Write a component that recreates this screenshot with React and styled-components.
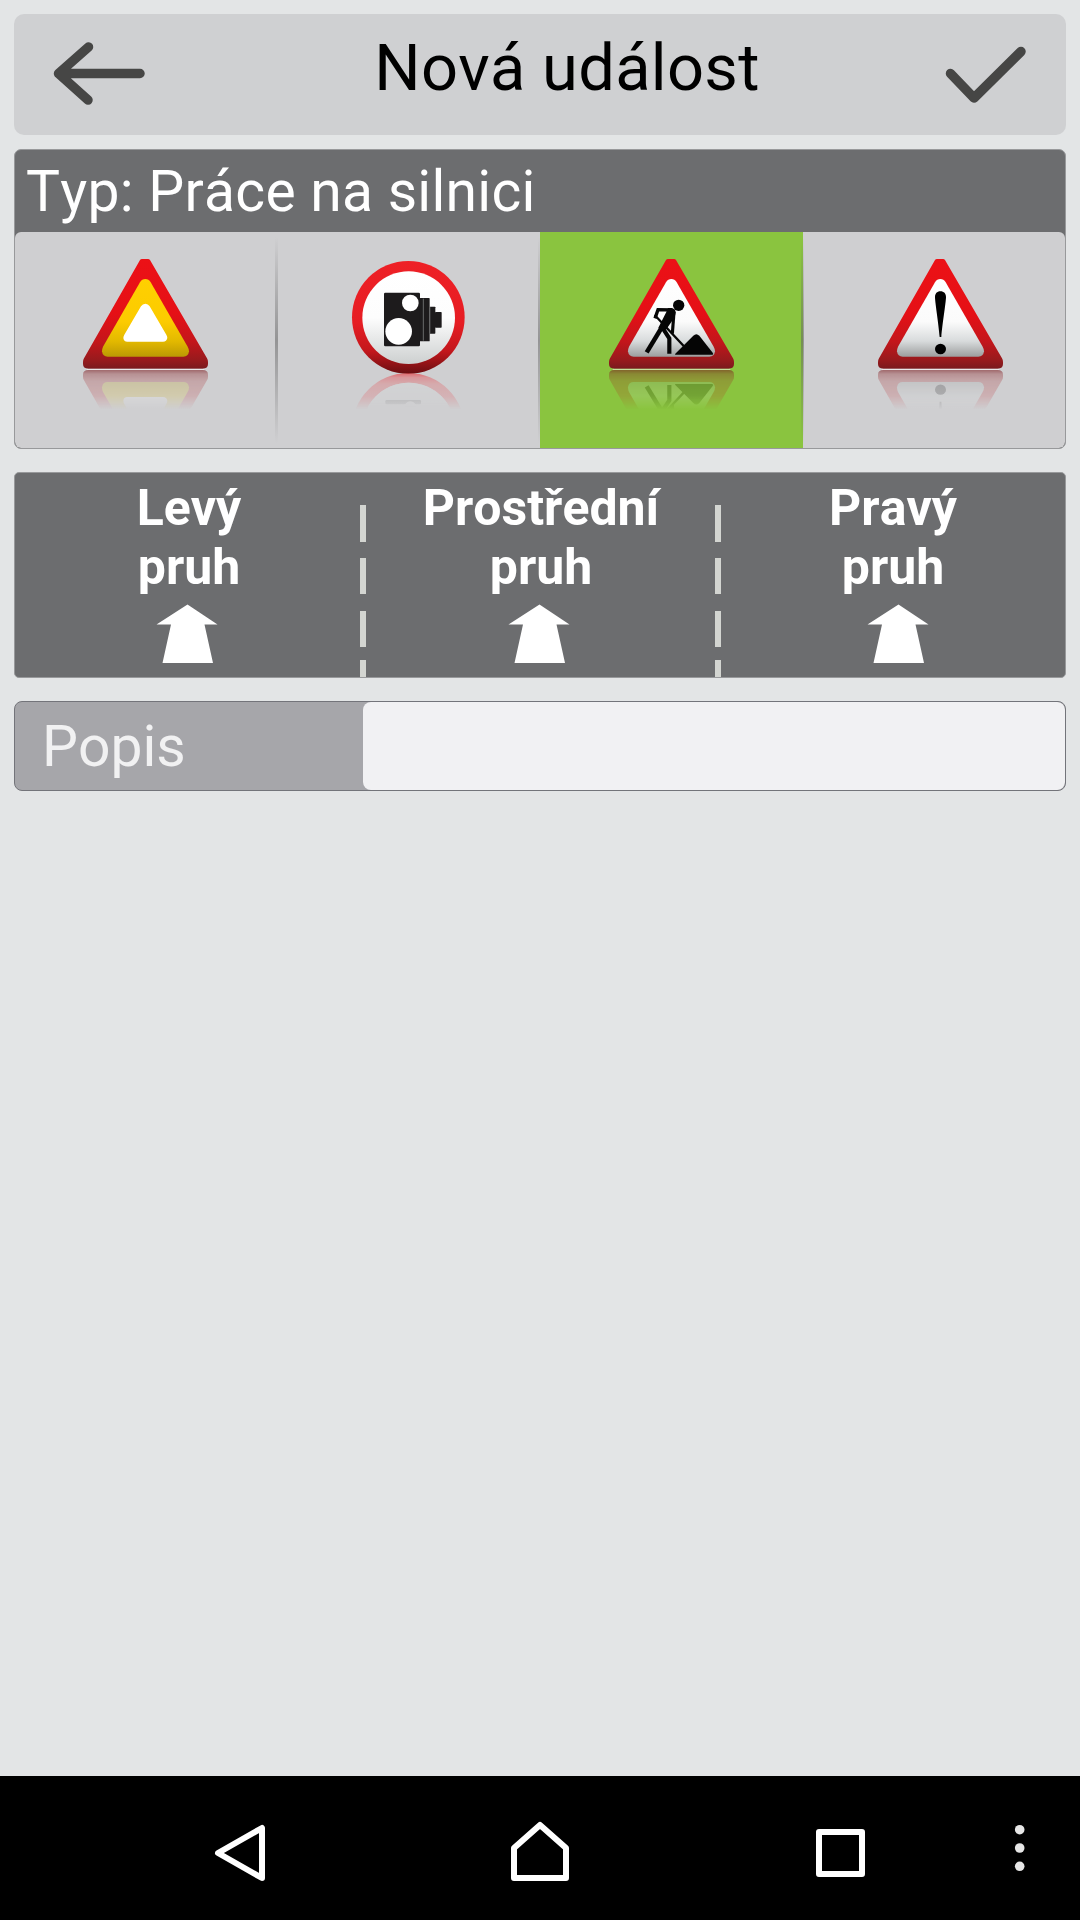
import React from 'react';
import styled, { createGlobalStyle } from 'styled-components';

const GlobalStyle = createGlobalStyle`
  * { box-sizing: border-box; }
  body { margin: 0; background: #e3e5e6; }
  button { border: 0; padding: 0; margin: 0; background: none; font: inherit; color: inherit; }
  svg { display: block; }
`;

const Screen = styled.div`
  display: flex;
  flex-direction: column;
  width: 1080px;
  height: 1920px;
  background: #e3e5e6;
  font-family: Roboto, 'Noto Sans', sans-serif;
  font-kerning: none;
`;

const Content = styled.main`
  flex: 1;
  display: flex;
  flex-direction: column;
  padding: 14px 14px 0;
`;

const Header = styled.header`
  display: grid;
  grid-template-columns: 185px 1fr 131px;
  height: 121px;
  border-radius: 10px;
  background: #cfd0d2;
`;

const HeaderButton = styled.button`
  display: flex;
  align-items: flex-start;
  padding: ${(p) => p.$pad};
`;

const Title = styled.h1`
  margin: 0;
  padding-top: 16px;
  text-align: center;
  font-size: 65px;
  font-weight: 400;
  line-height: 76px;
  letter-spacing: 0.3px;
  color: #000;
  white-space: nowrap;
`;

const TypePanel = styled.section`
  margin-top: 14px;
  height: 300px;
  border: 1px solid #98999b;
  border-radius: 7px;
  background: #6c6d6f;
  overflow: hidden;
`;

const TypeTitle = styled.h2`
  margin: 0;
  height: 82px;
  padding: 8px 0 0 11px;
  font-size: 57px;
  font-weight: 400;
  line-height: 67px;
  letter-spacing: 0.26px;
  color: #fff;
  white-space: nowrap;
`;

const TypeRow = styled.div`
  display: grid;
  grid-template-columns: 262px 263px 263px 1fr;
  height: 216px;
  border-radius: 6px;
  background: #cfcfd1;
  overflow: hidden;
`;

const TypeCell = styled.button`
  position: relative;
  display: flex;
  justify-content: center;
  align-items: flex-start;
  padding: 25px ${(p) => p.$right || 0}px 0 ${(p) => p.$left || 0}px;
  background: ${(p) => (p.$selected ? '#8ac43f' : 'transparent')};

  &:not(:last-child)::after {
    content: '';
    position: absolute;
    top: 5px;
    bottom: 5px;
    right: -1px;
    width: 3px;
    background: linear-gradient(rgba(100, 100, 100, 0), rgba(100, 100, 100, 0.55) 50%, rgba(100, 100, 100, 0));
  }
`;

const LanePanel = styled.section`
  display: grid;
  grid-template-columns: 345px 6px 349px 6px 1fr;
  margin-top: 23px;
  height: 206px;
  border: 1px solid #98999b;
  border-radius: 5px;
  background: #6c6d6f;
  overflow: hidden;
`;

const Lane = styled.button`
  display: flex;
  flex-direction: column;
  align-items: center;
  justify-content: flex-start;
  padding: 6px ${(p) => p.$right || 0}px 0 ${(p) => p.$left || 0}px;
  font-weight: 700;
  font-size: 50px;
  line-height: 59px;
  color: #fff;
`;

const LaneArrow = styled.svg`
  margin-top: 7px;
  margin-left: ${(p) => p.$shift || 0}px;
`;

const LaneDivider = styled.div`
  background: linear-gradient(#d3d5d1, #d3d5d1) 0 32px / 6px 37px no-repeat,
    linear-gradient(#d3d5d1, #d3d5d1) 0 85px / 6px 36px no-repeat,
    linear-gradient(#d3d5d1, #d3d5d1) 0 138px / 6px 36px no-repeat,
    linear-gradient(#d3d5d1, #d3d5d1) 0 187px / 6px 17px no-repeat;
`;

const Field = styled.label`
  display: flex;
  margin-top: 23px;
  height: 90px;
  border: 1px solid #73747a;
  border-radius: 8px;
  background: #a6a6aa;
  overflow: hidden;
`;

const FieldLabel = styled.span`
  width: 348px;
  padding: 11px 0 0 27px;
  font-size: 57px;
  line-height: 67px;
  color: #f1f1f2;
`;

const FieldInput = styled.input`
  flex: 1;
  min-width: 0;
  border: 0;
  outline: 0;
  border-radius: 8px;
  background: #f1f1f3;
  font: 400 50px Roboto, sans-serif;
`;

const NavBar = styled.nav`
  display: grid;
  grid-template-columns: 300px 300px 300px 60px;
  height: 144px;
  padding-left: 90px;
  background: #000;
`;

const NavButton = styled.button`
  display: flex;
  justify-content: center;
  align-items: flex-start;
  padding-top: 44px;
`;

const TRIANGLE = 'M240 90 Q242 87 246 87 L264 87 Q268 87 270 90 L441 385 Q444 390 444 396 L444 402 Q444 416 428 416 L85 416 Q69 416 69 402 L69 396 Q69 390 72 385 Z';
const INNER = 'M240 157 Q246 147 256 147 Q266 147 272 157 L383 350 Q387 357 387 364 Q385 380 370 380 L143 380 Q128 380 126 364 Q126 357 129 350 Z';

function SignDefs({ id, mirror, warm }) {
  return (
    <defs>
      <linearGradient id={id + 'red'} x1="0" y1="87" x2="0" y2="416" gradientUnits="userSpaceOnUse">
        <stop offset="0" stopColor="#ec1116" />
        <stop offset="0.5" stopColor="#e51016" />
        <stop offset="0.75" stopColor="#c4161b" />
        <stop offset="0.92" stopColor="#981a1d" />
        <stop offset="1" stopColor="#7a1a1e" />
      </linearGradient>
      <linearGradient id={id + 'in'} x1="0" y1="147" x2="0" y2="380" gradientUnits="userSpaceOnUse">
        <stop offset="0" stopColor={warm ? '#ffd000' : '#ffffff'} />
        <stop offset="0.55" stopColor={warm ? '#fccb00' : '#fbfbfb'} />
        <stop offset="0.8" stopColor={warm ? '#e3b900' : '#d8dbdc'} />
        <stop offset="1" stopColor={warm ? '#bb9904' : '#9c9e9e'} />
      </linearGradient>
      <linearGradient id={id + 'fade'} x1="0" y1={mirror} x2="0" y2="538" gradientUnits="userSpaceOnUse">
        <stop offset="0" stopColor="#fff" stopOpacity="0.6" />
        <stop offset="0.12" stopColor="#fff" stopOpacity="0.34" />
        <stop offset="0.3" stopColor="#fff" stopOpacity="0.22" />
        <stop offset="0.65" stopColor="#fff" stopOpacity="0.17" />
        <stop offset="1" stopColor="#fff" stopOpacity="0" />
      </linearGradient>
      <mask id={id + 'mask'} maskUnits="userSpaceOnUse" x="0" y={mirror} width="600" height="130">
        <rect x="0" y={mirror} width="600" height="130" fill={`url(#${id}fade)`} />
      </mask>
    </defs>
  );
}

function TriangleSign({ id, warm, children }) {
  const art = (
    <>
      <path d={TRIANGLE} fill={`url(#${id}red)`} />
      <path d={INNER} fill={`url(#${id}in)`} />
      {children}
    </>
  );
  return (
    <svg width="126" height="155" viewBox="69 81 378 465">
      <SignDefs id={id} mirror={418} warm={warm} />
      {art}
      <path d="M80 418 H433" stroke="#fff" strokeOpacity="0.6" strokeWidth="3" />
      <g mask={`url(#${id}mask)`}>
        <g transform="translate(0 836) scale(1 -1)">{art}</g>
      </g>
    </svg>
  );
}

function JamSign() {
  return (
    <TriangleSign id="jam" warm>
      <path d="M243 229 Q248 221 256 221 Q264 221 269 229 L319 314 Q322 320 322 324 Q320 335 309 335 L202 335 Q191 335 190 324 Q190 319 193 314 Z" fill="#fff" />
    </TriangleSign>
  );
}

function WorksSign() {
  return (
    <TriangleSign id="works">
      <g fill="none" stroke="#050505">
        <path d="M258 240 L216 239 L207 265" strokeWidth="10" />
        <path d="M206 255 L293 348" strokeWidth="7" />
        <path d="M264 246 L259 311" strokeWidth="9.500" />
        <path d="M230 288 L182 367" strokeWidth="13.500" />
        <path d="M229 293 L250 325 L250 371" strokeWidth="12.500" />
      </g>
      <path d="M246 234 L258 234 Q269 237 269 247 L266 262 L241 298 L225 304 L217 293 L241 246 Z" fill="#050505" />
      <circle cx="278" cy="226" r="17" fill="#050505" />
      <path d="M269 374 Q265 374 268 371 L322 317 Q331 308 340 317 L380 368 Q384 374 377 374 Z" fill="#050505" />
    </TriangleSign>
  );
}

function DangerSign() {
  return (
    <TriangleSign id="danger">
      <path d="M256 184 C267 184 273 191 273 201 C273 216 262 282 259 321 L254 321 C251 282 240 216 240 201 C240 191 246 184 256 184 Z" />
      <ellipse cx="256.500" cy="357" rx="16.500" ry="15.500" />
    </TriangleSign>
  );
}

function CameraSign() {
  const art = (
    <>
      <circle cx="265" cy="262" r="169" fill="url(#camring)" />
      <circle cx="266" cy="263" r="139" fill="url(#camface)" />
      <g fill="#1d1b1c">
        <rect x="192" y="188" width="108" height="161" rx="4" />
        <rect x="299" y="204" width="30" height="130" rx="2" />
        <rect x="329" y="230" width="17" height="81" rx="2" />
        <rect x="345" y="246" width="20" height="47" rx="2" />
      </g>
      <path d="M310 206 V332 M329.500 231 V310" stroke="#77797a" strokeWidth="2.500" />
      <circle cx="271" cy="219" r="25" fill="#fff" />
      <circle cx="236" cy="304" r="40" fill="#fff" />
    </>
  );
  return (
    <svg width="126" height="155" viewBox="78 81 378 465">
      <SignDefs id="cam" mirror={430} />
      <defs>
        <linearGradient id="camring" x1="0" y1="93" x2="0" y2="431" gradientUnits="userSpaceOnUse">
          <stop offset="0" stopColor="#ee2026" />
          <stop offset="0.55" stopColor="#e61d23" />
          <stop offset="0.8" stopColor="#c3171c" />
          <stop offset="1" stopColor="#6a0f12" />
        </linearGradient>
        <linearGradient id="camface" x1="0" y1="124" x2="0" y2="402" gradientUnits="userSpaceOnUse">
          <stop offset="0" stopColor="#fff" />
          <stop offset="0.5" stopColor="#fdfdfd" />
          <stop offset="1" stopColor="#cdd0d0" />
        </linearGradient>
      </defs>
      {art}
      <g mask="url(#cammask)">
        <g transform="translate(0 860) scale(1 -1)">
          <path d="M96 262 A169 169 0 0 0 434 262 L405 263 A139 139 0 0 1 127 263 Z" fill="#ec2a30" />
          <circle cx="266" cy="263" r="139" fill="#dcdede" />
          <rect x="196" y="337" width="107" height="13" rx="4" fill="#555" />
          <circle cx="271" cy="328" r="18" fill="#d8d8d8" />
        </g>
      </g>
    </svg>
  );
}

const TYPES = [
  { name: 'jam', Sign: JamSign, right: 1 },
  { name: 'camera', Sign: CameraSign },
  { name: 'works', Sign: WorksSign, selected: true },
  { name: 'danger', Sign: DangerSign, left: 13 },
];

function LaneButton({ name, left, right, shift }) {
  return (
    <Lane $left={left} $right={right}>
      <span>{name}</span>
      <span>pruh</span>
      <LaneArrow $shift={shift} width="62" height="59" viewBox="0 0 62 59">
        <path d="M31.500 0.500 L61.500 20.500 H48.500 L57 59 H6.500 L15 20.500 H0.500 Z" fill="#fff" />
      </LaneArrow>
    </Lane>
  );
}

export default function App() {
  return (
    <Screen>
      <GlobalStyle />
      <Content>
        <Header>
          <HeaderButton $pad="26px 0 0 37px">
            <svg width="94" height="68" viewBox="0 0 94 68" fill="none" stroke="#464645" strokeWidth="9.500" strokeLinecap="round" strokeLinejoin="round">
              <path d="M37.500 7 L7.500 33.500 L37 60 M8 33.500 H89" />
            </svg>
          </HeaderButton>
          <Title>Nová událost</Title>
          <HeaderButton $pad="28px 0 0 7px">
            <svg width="90" height="66" viewBox="0 0 90 66" fill="none" stroke="#464645" strokeWidth="9.500" strokeLinecap="round" strokeLinejoin="round">
              <path d="M8.500 31.500 L32 56 L79 9.500" />
            </svg>
          </HeaderButton>
        </Header>

        <TypePanel>
          <TypeTitle>Typ: Práce na silnici</TypeTitle>
          <TypeRow>
            {TYPES.map(({ name, Sign, selected, left, right }) => (
              <TypeCell key={name} $selected={selected} $left={left} $right={right}>
                <Sign />
              </TypeCell>
            ))}
          </TypeRow>
        </TypePanel>

        <LanePanel>
          <LaneButton name="Levý" left={3} shift={-4} />
          <LaneDivider />
          <LaneButton name="Prostřední" left={1} shift={-5} />
          <LaneDivider />
          <LaneButton name="Pravý" shift={9} />
        </LanePanel>

        <Field>
          <FieldLabel>Popis</FieldLabel>
          <FieldInput />
        </Field>
      </Content>

      <NavBar>
        <NavButton>
          <svg width="60" height="64" viewBox="210 1820 60 64" fill="none" stroke="#fff" strokeWidth="6" strokeLinejoin="round">
            <path d="M262 1828 V1878 L218 1853 Z" />
          </svg>
        </NavButton>
        <NavButton>
          <svg width="60" height="64" viewBox="510 1820 60 64" fill="none" stroke="#fff" strokeWidth="6" strokeLinejoin="round">
            <path d="M514 1848 L540 1825 L566 1848 V1878 H514 Z" />
          </svg>
        </NavButton>
        <NavButton>
          <svg width="60" height="64" viewBox="810 1820 60 64" fill="none" stroke="#fff" strokeWidth="6" strokeLinejoin="round">
            <path d="M819 1832 H862 V1874 H819 Z" />
          </svg>
        </NavButton>
        <NavButton>
          <svg width="20" height="64" viewBox="1010 1820 20 64" fill="#e6e6e6">
            <circle cx="1019.700" cy="1829.700" r="4.800" />
            <circle cx="1019.700" cy="1848" r="4.800" />
            <circle cx="1019.700" cy="1866.300" r="4.800" />
          </svg>
        </NavButton>
      </NavBar>
    </Screen>
  );
}
